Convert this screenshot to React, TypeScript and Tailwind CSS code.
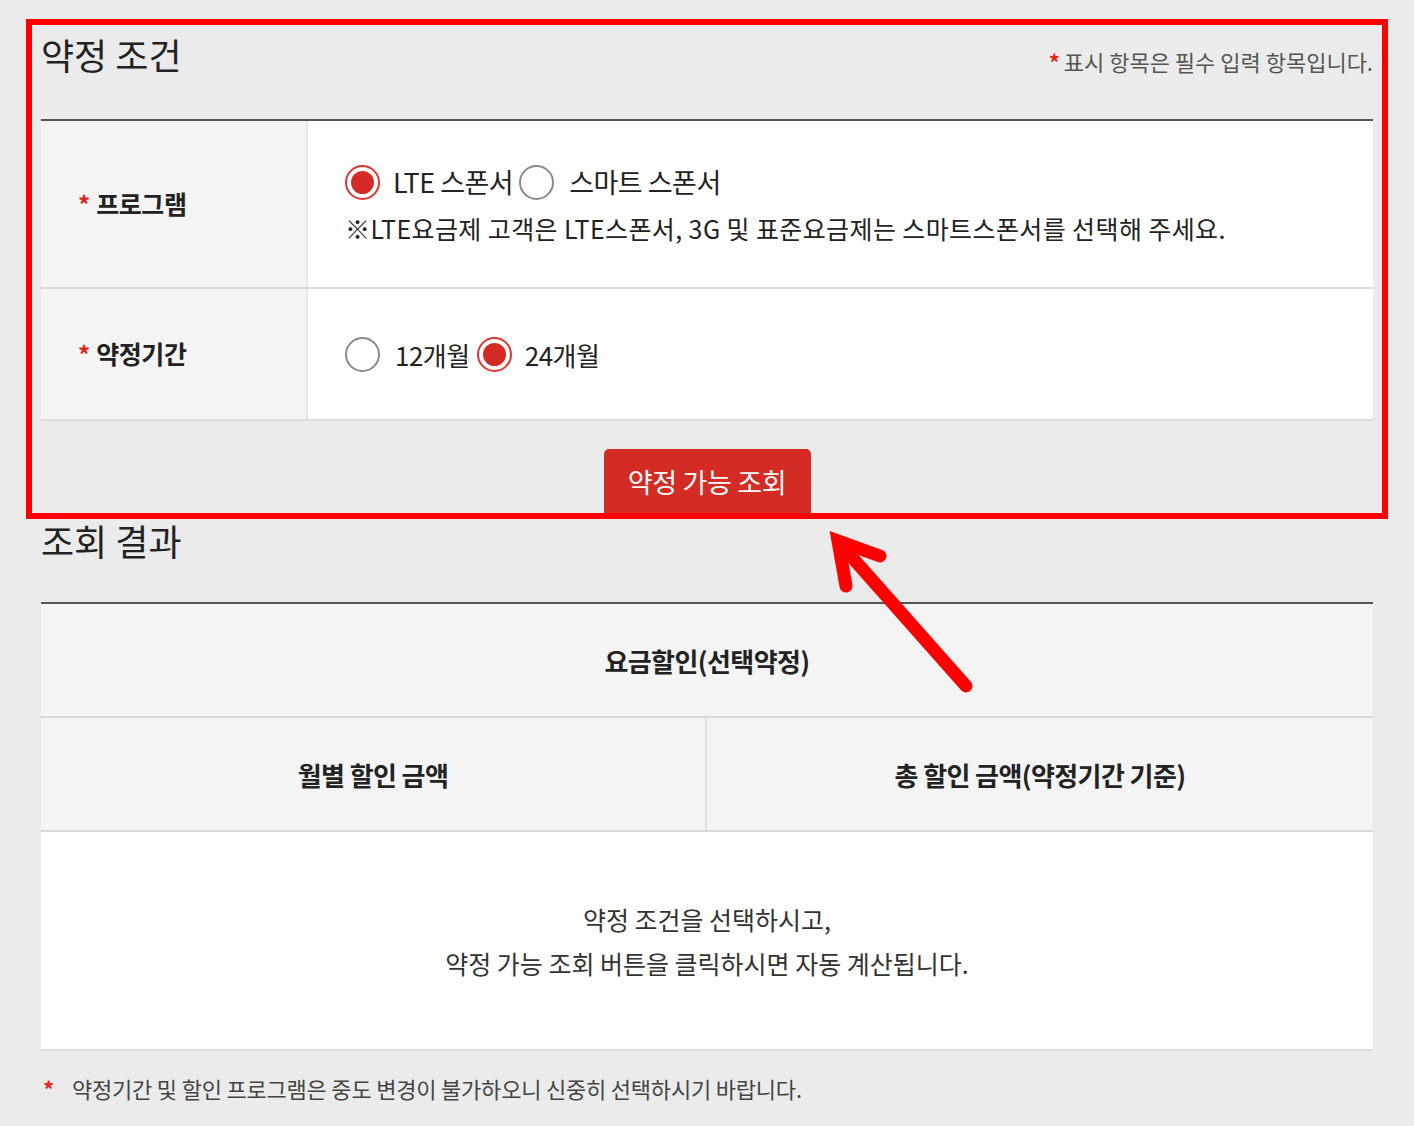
import React from 'react';

const font = { fontFamily: '"Noto Sans CJK KR", "Noto Sans", sans-serif' };

const Radio = ({ checked }: { checked: boolean }) =>
  checked ? (
    <span className="flex h-[35px] w-[35px] shrink-0 items-center justify-center rounded-full border-2 border-[#e3342f] bg-white">
      <span className="h-[23px] w-[23px] rounded-full bg-[#d52b25]" />
    </span>
  ) : (
    <span className="h-[35px] w-[35px] shrink-0 rounded-full border-2 border-[#8a8a8a] bg-white" />
  );

const Star = () => <span className="mr-[6px] text-[24px] font-bold text-[#e3241b]">*</span>;

const FormRow = ({ label, height, children }: { label: string; height: string; children: React.ReactNode }) => (
  <div className={`flex border-b-2 border-[#dcdcdc] ${height}`}>
    <div className="flex w-[267px] shrink-0 items-center border-r-2 border-[#e6e6e6] bg-[#f4f4f4] pl-[37px]">
      <Star />
      <span className="text-[25px] font-bold tracking-[-0.4px] text-[#222]">{label}</span>
    </div>
    <div className="flex flex-1 flex-col justify-center bg-white pl-[37px] text-[#222]">{children}</div>
  </div>
);

export default function App() {
  return (
    <div className="relative h-[1126px] w-[1414px] overflow-hidden bg-[#ebebeb] px-[41px]" style={font}>
      {/* 약정 조건 */}
      <div className="flex h-[119px] items-start justify-between pt-[29px]">
        <h2 className="text-[36px] leading-[50px] text-[#222]">약정 조건</h2>
        <p className="mt-[17px] text-[22px] leading-[30px] tracking-[0px] text-[#555]">
          <span className="mr-[4px] font-bold text-[#e3241b]">*</span>표시 항목은 필수 입력 항목입니다.
        </p>
      </div>

      <div className="border-t-2 border-[#555]">
        <FormRow label="프로그램" height="h-[168px]">
          <div className="flex h-[34px] items-center text-[27px] tracking-[-0.5px]">
            <Radio checked />
            <span className="ml-[13px] mr-[6px]">LTE 스폰서</span>
            <Radio checked={false} />
            <span className="ml-[15px]">스마트 스폰서</span>
          </div>
          <p className="mt-[14px] text-[25px] leading-[30px] tracking-[0.4px]">
            ※LTE요금제 고객은 LTE스폰서, 3G 및 표준요금제는 스마트스폰서를 선택해 주세요.
          </p>
        </FormRow>
        <FormRow label="약정기간" height="h-[132px]">
          <div className="flex h-[34px] items-center text-[26px] tracking-[-0.5px]">
            <Radio checked={false} />
            <span className="ml-[15px] mr-[7px]">12개월</span>
            <Radio checked />
            <span className="ml-[13px]">24개월</span>
          </div>
        </FormRow>
      </div>

      <div className="mt-[28px] flex justify-center">
        <button className="h-[67px] w-[207px] rounded-t-[5px] bg-[#d52b25] text-[27px] tracking-[-0.3px] text-white">
          약정 가능 조회
        </button>
      </div>

      {/* 조회 결과 */}
      <h2 className="mb-[38px] text-[36px] leading-[48px] text-[#222]">조회 결과</h2>

      <div className="border-t-2 border-[#555] text-[#222]">
        <div className="flex h-[114px] items-center justify-center border-b-2 border-[#d8d8d8] bg-[#f4f4f4] text-[26px] font-bold tracking-[-0.6px]">
          요금할인(선택약정)
        </div>
        <div className="flex h-[114px] border-b-2 border-[#d8d8d8] bg-[#f4f4f4] text-[26px] font-bold tracking-[-0.6px]">
          <div className="flex w-[666px] items-center justify-center border-r-2 border-[#dedede]">월별 할인 금액</div>
          <div className="flex flex-1 items-center justify-center">총 할인 금액(약정기간 기준)</div>
        </div>
        <div className="flex h-[219px] flex-col items-center justify-center border-b-2 border-[#dcdcdc] bg-white text-[25px] leading-[44px] tracking-[0px] text-[#333]">
          <p>약정 조건을 선택하시고,</p>
          <p>약정 가능 조회 버튼을 클릭하시면 자동 계산됩니다.</p>
        </div>
      </div>

      <p className="mt-[22px] flex items-center text-[22px] leading-[30px] tracking-[-0.2px] text-[#444]">
        <span className="ml-[2px] mr-[18px] text-[22px] font-bold text-[#e3241b]">*</span>
        약정기간 및 할인 프로그램은 중도 변경이 불가하오니 신중히 선택하시기 바랍니다.
      </p>

      {/* annotation overlay */}
      <div className="pointer-events-none absolute left-[26px] top-[19px] h-[500px] w-[1362px] border-[6px] border-[#ff0000]" />
      <svg className="pointer-events-none absolute left-0 top-0" width="1414" height="1126">
        <path d="M966 686 L842 546" stroke="#ff0000" strokeWidth="13" strokeLinecap="round" fill="none" />
        <path d="M880 556 L838 541 L846 586" stroke="#ff0000" strokeWidth="13" strokeLinecap="round" strokeLinejoin="miter" fill="none" />
      </svg>
    </div>
  );
}
